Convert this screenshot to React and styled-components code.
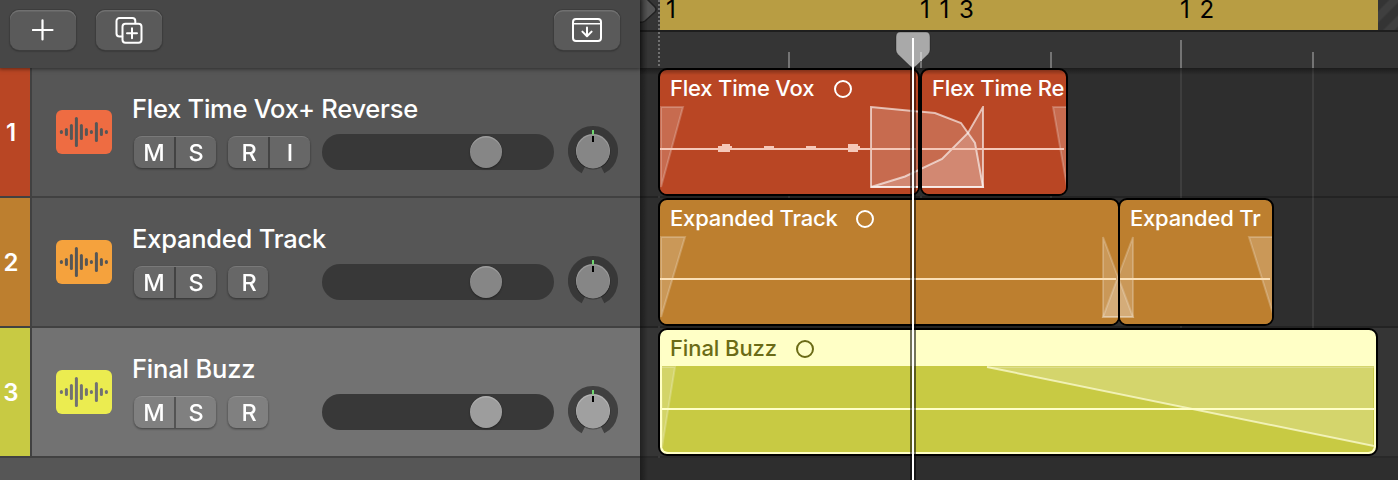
import React from 'react';
import styled, { createGlobalStyle } from 'styled-components';

const GlobalStyle = createGlobalStyle`
    * {
        box-sizing: border-box;
    }
    body {
        margin: 0;
        background: #2e2e2e;
        overflow: hidden;
        font-family: Inter, 'Liberation Sans', sans-serif;
        -webkit-font-smoothing: antialiased;
    }
    svg {
        display: block;
    }
`;

const Window = styled.div`
    position: relative;
    display: flex;
    width: 1398px;
    height: 480px;
    overflow: hidden;
`;

/* ---- track headers ---- */

const Sidebar = styled.div`
    width: 640px;
    flex: none;
    background: #565656;
`;

const Toolbar = styled.div`
    position: relative;
    z-index: 1;
    height: 68px;
    padding: 10px 20px 0 10px;
    display: flex;
    background: #474747;
    box-shadow: 0 0 4px 1px rgba(0, 0, 0, 0.5);
`;

const ToolButton = styled.div`
    width: 66px;
    height: 40px;
    margin-right: 20px;
    margin-left: ${props => (props.$right ? 'auto' : 0)};
    ${props => props.$right && 'margin-right: 0;'}
    display: flex;
    align-items: center;
    justify-content: center;
    border-radius: 9px;
    background: #5a5a5a;
    box-shadow: inset 0 1.5px 0 #707070, 0 0 0 1px #3d3d3d, 0 1px 2px rgba(0, 0, 0, 0.5);
`;

const Track = styled.div`
    display: flex;
    height: 130px;
    border-bottom: 2px solid #414141;
    background: ${props => (props.$selected ? '#727272' : '#565656')};
`;

const TrackNumber = styled.div`
    width: 32px;
    padding-right: 8px;
    padding-top: 1px;
    display: flex;
    align-items: center;
    justify-content: center;
    border-right: 2px solid #414141;
    background: ${props => props.$color};
    color: white;
    font-size: 24px;
    font-weight: 600;
`;

const TrackIcon = styled.div`
    width: 56px;
    height: 44px;
    margin: 42px 20px 0 24px;
    border-radius: 6px;
    background: ${props => props.$color};
`;

const TrackBody = styled.div`
    display: flex;
    flex-direction: column;
    padding-top: 25px;
`;

const TrackName = styled.div`
    height: 32px;
    line-height: 32px;
    margin-bottom: 9px;
    color: white;
    font-size: 25.5px;
    font-weight: 500;
    letter-spacing: ${props => props.$spacing || 0}px;
    white-space: nowrap;
`;

const Controls = styled.div`
    display: flex;
    width: 486px;
    padding-left: 2px;
`;

const ButtonGroup = styled.div`
    display: flex;
    height: 32px;
    margin: 2px 12px 0 0;
    border-radius: 8px;
    overflow: hidden;
    background: ${props => (props.$selected ? '#808080' : '#676767')};
    border-top: 1px solid ${props => (props.$selected ? '#909090' : '#797979')};
`;

const GroupShadow = styled.div`
    height: 34px;
    display: flex;
    filter: drop-shadow(0 1px 1px rgba(0, 0, 0, 0.45));
`;

const LetterButton = styled.div`
    width: ${props => (props.$first ? 40 : 42)}px;
    height: 31px;
    line-height: 31px;
    text-align: center;
    color: white;
    font-size: 23.5px;
    font-weight: 500;
    text-indent: ${props => props.$nudge || 0}px;
    & + & {
        border-left: 2px solid rgba(0, 0, 0, 0.34);
    }
`;

const Slider = styled.div`
    width: 232px;
    height: 36px;
    margin-left: auto;
    padding: 2px 0 0 148px;
    border-radius: 18px;
    background: #383838;
`;

const Thumb = styled.div`
    width: 32px;
    height: 32px;
    border-radius: 50%;
    background: ${props => (props.$selected ? '#9d9d9d' : '#868686')};
    box-shadow: inset 0 1.5px 0 rgba(255, 255, 255, 0.2), 0 1px 2px rgba(0, 0, 0, 0.4);
`;

const KnobSvg = styled.svg`
    margin: -8px 0 0 14px;
    flex: none;
`;

/* ---- timeline ---- */

const Timeline = styled.div`
    position: relative;
    flex: 1;
    background: #2e2e2e;
`;

const Ruler = styled.div`
    position: relative;
    height: 68px;
    background: #353535;
`;

const CycleRow = styled.div`
    display: flex;
    height: 32px;
    border-bottom: 2px solid #1e1e1e;
`;

const CycleStart = styled.div`
    width: 20px;
`;

const Cycle = styled.div`
    display: flex;
    width: 718px;
    height: 30px;
    background: #b89d43;
`;

const BarLabel = styled.div`
    width: ${props => props.$width}px;
    padding-left: ${props => props.$indent}px;
    margin-top: -4px;
    height: 28px;
    line-height: 28px;
    color: black;
    font-size: 24px;
    word-spacing: 3px;
    white-space: nowrap;
`;

const Hatching = styled.div`
    flex: 1;
    background: repeating-linear-gradient(135deg, #343434 0 7px, #3f3f3f 9px 15px, #343434 17px);
`;

const Overlay = styled.svg`
    position: absolute;
    left: 0;
    top: 0;
    pointer-events: none;
`;

const Lane = styled.div`
    display: flex;
    height: 130px;
    padding-left: 18px;
    border-bottom: 2px solid rgba(0, 0, 0, 0.22);
    background: ${props => (props.$selected ? '#353535' : '#2e2e2e')};
`;

const Clip = styled.div`
    position: relative;
    flex: none;
    width: ${props => props.$width}px;
    height: 128px;
    margin-left: ${props => props.$shift || 0}px;
    border: 2px solid black;
    border-radius: 9px;
    overflow: hidden;
    color: ${props => (props.$selected ? '#6b6b16' : 'white')};
    background: ${props => (props.$selected ? '#ffffc6' : props.$color)};
`;

const ClipHeader = styled.div`
    display: flex;
    align-items: center;
    height: 36px;
    padding: 1px 0 0 10px;
    font-size: 22px;
    line-height: 26px;
    font-weight: 500;
    white-space: nowrap;
`;

const ClipName = styled.span`
    width: ${props => props.$width}px;
    margin-top: -2px;
    letter-spacing: ${props => props.$spacing || 0}px;
`;

const LoopDot = styled.span`
    width: 18px;
    height: 18px;
    border: 2px solid currentColor;
    border-radius: 50%;
`;

const ClipBody = styled.div`
    height: ${props => (props.$selected ? 86 : 88)}px;
    margin: ${props => (props.$selected ? '0 2px 2px' : 0)};
    border-radius: 0 0 6px 6px;
    overflow: hidden;
    background: ${props => props.$color};
`;

const TopShadow = styled.div`
    position: absolute;
    top: 68px;
    left: 0;
    right: 0;
    height: 7px;
    background: linear-gradient(rgba(0, 0, 0, 0.4), transparent);
`;

const SideShadow = styled.div`
    position: absolute;
    top: 0;
    bottom: 0;
    left: 0;
    width: 8px;
    background: linear-gradient(90deg, rgba(0, 0, 0, 0.38), transparent);
`;

const bars = [4, 8, 16, 30, 16, 8, 4, 20, 8, 4];

const WaveIcon = ({ stroke }) => (
    <svg width="56" height="44">
        {bars.map((h, i) => (
            <rect key={i} x={3.9 + i * 5} y={22 - h / 2} width="3" height={h} rx="1.5" fill={stroke} />
        ))}
    </svg>
);

const Knob = ({ selected }) => (
    <KnobSvg width="50" height="50">
        <path d="M15.7 43.3 A20.5 20.5 0 1 1 34.3 43.3" fill="none" stroke={selected ? '#404040' : '#383838'} strokeWidth="9" />
        <circle cx="25" cy="26" r="17.5" fill="rgba(0,0,0,0.3)" />
        <circle cx="25" cy="25" r="17" fill={selected ? '#b4b4b4' : '#9b9b9b'} />
        <circle cx="25" cy="26" r="16.4" fill={selected ? '#a0a0a0' : '#868686'} />
        <rect x="24" y="4" width="2" height="4.5" fill="#6fd66f" />
        <rect x="24" y="10" width="2" height="6" fill="black" />
    </KnobSvg>
);

const PlusIcon = () => (
    <svg width="22" height="22" fill="none" stroke="white" strokeWidth="2.2" strokeLinecap="round">
        <path d="M10.5 1.3v19.2M0.9 11h19.6" />
    </svg>
);

const DuplicateIcon = () => (
    <svg width="28" height="28" fill="none" stroke="white" strokeWidth="2" strokeLinecap="round" strokeLinejoin="round">
        <path d="M7.2 20.5H4.5a3 3 0 0 1-3-3V5a3 3 0 0 1 3-3h12.8a3 3 0 0 1 3 3v1.8" />
        <rect x="7.5" y="7.7" width="19" height="19" rx="3" />
        <path d="M17 12.2v10M12 17.2h10" />
    </svg>
);

const ImportIcon = () => (
    <svg width="30" height="24" fill="none" stroke="white" strokeWidth="2" strokeLinecap="round" strokeLinejoin="round">
        <rect x="1" y="1" width="28" height="22" rx="3" />
        <path d="M2 5.7h26" strokeWidth="1.6" />
        <path d="M15 9.5v8.2M10.4 13.6l4.6 4.6 4.6-4.6" />
    </svg>
);

const tracks = [
    { name: 'Flex Time Vox+ Reverse', spacing: -0.27, color: '#b94624', icon: '#ee6c42', input: true },
    { name: 'Expanded Track', spacing: -0.22, color: '#bd7f2f', icon: '#f5a23d' },
    { name: 'Final Buzz', spacing: -0.17, color: '#c8ca43', icon: '#ebec50', selected: true },
];

const fade = { fill: 'rgba(255,255,255,0.2)', stroke: 'rgba(255,255,255,0.22)', strokeWidth: 2 };

// Curves are drawn in timeline coordinates so both clips share one crossfade
const CurvedCrossfade = () => (
    <g fill="rgba(255,255,255,0.2)" stroke="rgba(255,255,255,0.62)" strokeWidth="2">
        <path d="M231 39 L295 45 L321 55 L335 75 L343 119 H231 Z" />
        <path d="M231 119 L265 108.5 L302 91 L328 65 L343 39 V119 Z" />
    </g>
);

const LinearCrossfade = () => (
    <g {...fade}>
        <path d="M463 39 L493 119 H463 Z" />
        <path d="M493 39 L463 119 H493 Z" />
    </g>
);

const ClipView = ({ name, nameWidth, spacing, x, width, shift, color, selected, loop, children }) => (
    <Clip $width={width} $shift={shift} $color={color} $selected={selected}>
        <ClipHeader>
            <ClipName $width={nameWidth} $spacing={spacing}>{name}</ClipName>
            {loop && <LoopDot />}
        </ClipHeader>
        <ClipBody $color={color} $selected={selected}>
            <svg
                width={selected ? width - 8 : width - 4}
                height={selected ? 86 : 88}
                viewBox={`${x} 38 ${selected ? width - 8 : width - 4} ${selected ? 86 : 88}`}
            >
                {children}
            </svg>
        </ClipBody>
    </Clip>
);

const TrackRow = ({ track, number }) => (
    <Track $selected={track.selected}>
        <TrackNumber $color={track.color}>{number}</TrackNumber>
        <TrackIcon $color={track.icon}>
            <WaveIcon stroke={track.selected ? '#727272' : '#565656'} />
        </TrackIcon>
        <TrackBody>
            <TrackName $spacing={track.spacing}>{track.name}</TrackName>
            <Controls>
                <GroupShadow>
                    <ButtonGroup $selected={track.selected}>
                        <LetterButton $first>M</LetterButton>
                        <LetterButton>S</LetterButton>
                    </ButtonGroup>
                    <ButtonGroup $selected={track.selected}>
                        <LetterButton $first $nudge={2}>R</LetterButton>
                        {track.input && <LetterButton>I</LetterButton>}
                    </ButtonGroup>
                </GroupShadow>
                <Slider>
                    <Thumb $selected={track.selected} />
                </Slider>
                <Knob selected={track.selected} />
            </Controls>
        </TrackBody>
    </Track>
);

const App = () => (
    <Window>
        <GlobalStyle />
        <Sidebar>
            <Toolbar>
                <ToolButton><PlusIcon /></ToolButton>
                <ToolButton><DuplicateIcon /></ToolButton>
                <ToolButton $right><ImportIcon /></ToolButton>
            </Toolbar>
            {tracks.map((track, i) => (
                <TrackRow key={track.name} track={track} number={i + 1} />
            ))}
        </Sidebar>
        <Timeline>
            <Ruler>
                <CycleRow>
                    <CycleStart />
                    <Cycle>
                        <BarLabel $width={260} $indent={6}>1</BarLabel>
                        <BarLabel $width={260} $indent={0}>1 1 3</BarLabel>
                        <BarLabel $width={100} $indent={0}>1 2</BarLabel>
                    </Cycle>
                    <Hatching />
                </CycleRow>
                <Overlay width="758" height="68">
                    <path d="M-2 -2 H6 L15 7 Q17 9.5 15 12 L5 21 Q2 23 -2 22 Z" fill="#555" stroke="#222" strokeWidth="1.5" />
                    <path d="M19 0V68" stroke="#707070" strokeWidth="2" strokeDasharray="2 2" />
                    <path d="M149 52V68M281 52V68M411 52V68M673 52V68M541 40V68" stroke="#747474" strokeWidth="2" />
                </Overlay>
            </Ruler>
            <Lane>
                <ClipView name="Flex Time Vox" spacing={-0.2} nameWidth={164} x={20} width={262} color="#b94624" loop>
                    <path {...fade} d="M21 39 H43 L21 119 Z" />
                    <CurvedCrossfade />
                    <path
                        fill="#f5c8b9"
                        d="M20 80h256v2H20zM78 78h4v-2h8v2h2v4h-2v2h-8v-0h-4zM124 78h10v4h-10zM166 78h10v4h-10zM208 76h10v2h2v4h-2v2h-10z"
                    />
                </ClipView>
                <ClipView name="Flex Time Re" spacing={-0.15} x={282} width={148} color="#b94624">
                    <CurvedCrossfade />
                    <path {...fade} d="M413 39 H432 L427 119 Z" />
                    <path d="M282 81H424" stroke="#f5c8b9" strokeWidth="2" />
                </ClipView>
            </Lane>
            <Lane>
                <ClipView name="Expanded Track" spacing={-0.17} nameWidth={186} x={20} width={462} color="#bd7f2f" loop>
                    <path {...fade} d="M21 39 H45 L21 119 Z" />
                    <LinearCrossfade />
                    <path d="M20 81H476" stroke="#fbdfb6" strokeWidth="2" />
                </ClipView>
                <ClipView name="Expanded Tr" spacing={-0.2} x={480} width={156} shift={-2} color="#bd7f2f">
                    <LinearCrossfade />
                    <path {...fade} d="M609 39 H636 L634 119 Z" />
                    <path d="M480 81H630" stroke="#fbdfb6" strokeWidth="2" />
                </ClipView>
            </Lane>
            <Lane $selected>
                <ClipView name="Final Buzz" spacing={-0.1} nameWidth={126} x={22} width={720} color="#c8ca43" selected loop>
                    <path {...fade} d="M21 39 H35 L22 119 Z" />
                    <path d="M347 39 H733 V118 Z" fill="rgba(255,255,255,0.22)" />
                    <path d="M347 39 H734" stroke="rgba(255,255,255,0.22)" strokeWidth="2" />
                    <path d="M347 39 L734 118" stroke="rgba(255,255,220,0.7)" strokeWidth="2" />
                    <path d="M22 81H734" stroke="#ffffc6" strokeWidth="2" />
                </ClipView>
            </Lane>
            <Overlay width="758" height="480">
                <path
                    d="M541 68V198M673 68V328M541 326V328M149 196V198M281 196V198M411 196V198M19 196V198M19 326V328M19 456V458"
                    stroke="rgba(255,255,255,0.08)"
                    strokeWidth="2"
                />
            </Overlay>
            <TopShadow />
            <SideShadow />
            <Overlay width="758" height="480">
                <path d="M273 66V480" stroke="rgba(0,0,0,0.55)" strokeWidth="6" />
                <path
                    d="M260 32H286Q290 32 290 37V50Q290 52 288.5 54L276 66Q273 69 270 66L257.5 54Q256 52 256 50V37Q256 32 260 32Z"
                    fill="#a9a9a9"
                    stroke="rgba(0,0,0,0.3)"
                />
                <path d="M281 52V61" stroke="#c4c4c4" strokeWidth="2" />
                <path d="M273 38V480" stroke="white" strokeWidth="2" />
            </Overlay>
        </Timeline>
    </Window>
);

export default App;
